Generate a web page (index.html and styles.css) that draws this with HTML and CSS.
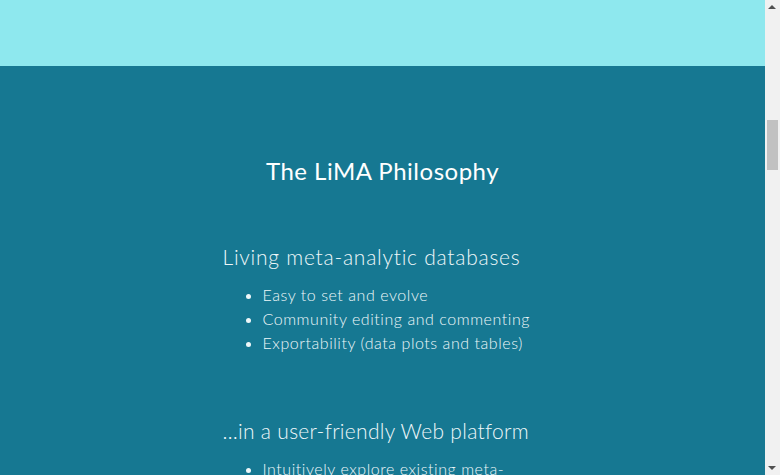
FILE: index.html
```html
<!DOCTYPE html>
<html>
<head>
<meta charset="utf-8">
<link rel="stylesheet" href="styles.css">
</head>
<body>
<div class="page">
  <header class="top-band"></header>
  <section class="philosophy">
    <h2 class="title">The LiMA Philosophy</h2>
    <div class="col">
      <h3 class="sub">Living meta-analytic databases</h3>
      <ul class="points">
        <li>Easy to set and evolve</li>
        <li>Community editing and commenting</li>
        <li>Exportability (data plots and tables)</li>
      </ul>
      <h3 class="sub second">…in a user-friendly Web platform</h3>
      <ul class="points">
        <li>Intuitively explore existing meta-analyses</li>
        <li>Create and share your own</li>
        <li>No programming needed</li>
      </ul>
    </div>
  </section>
</div>
<div class="scrollbar" aria-hidden="true">
  <span class="arrow up"></span>
  <span class="thumb"></span>
  <span class="arrow down"></span>
</div>
</body>
</html>
```
FILE: styles.css
```css
html, body {
  margin: 0;
  padding: 0;
}
body {
  font-family: Lato, "Open Sans", sans-serif;
  background: #167892;
  color: #ffffff;
}
.page {
  margin-right: 15px;
}
.top-band {
  height: 66px;
  background: #8ee8ee;
}
.philosophy {
  background: #167892;
  padding-top: 88px;
  padding-bottom: 400px;
}
.title {
  margin: 0;
  text-align: center;
  font-size: 24px;
  font-weight: 400;
  line-height: 34px;
  letter-spacing: 0.5px;
}
.col {
  width: 320px;
  margin: 55px auto 0;
}
.sub {
  margin: 0;
  font-size: 21px;
  font-weight: 300;
  line-height: 28px;
  letter-spacing: 0.75px;
  white-space: nowrap;
  color: #eef7f9;
}
.sub.second {
  margin-top: 62px;
  letter-spacing: 0.3px;
}
.points {
  margin: 12px 0 0;
  padding-left: 40px;
  font-size: 16px;
  font-weight: 300;
  line-height: 24px;
  letter-spacing: 0.55px;
  color: #eef7f9;
}
.scrollbar {
  position: fixed;
  top: 0;
  right: 0;
  width: 15px;
  height: 100%;
  background: #f1f1f1;
}
.arrow {
  position: absolute;
  left: 3px;
  width: 0;
  height: 0;
  border-left: 4px solid transparent;
  border-right: 4px solid transparent;
}
.arrow.up {
  top: 5px;
  border-bottom: 4px solid #505050;
}
.arrow.down {
  bottom: 5px;
  border-top: 4px solid #505050;
}
.thumb {
  position: absolute;
  top: 120px;
  left: 2px;
  width: 11px;
  height: 50px;
  background: #c1c1c1;
}
```
